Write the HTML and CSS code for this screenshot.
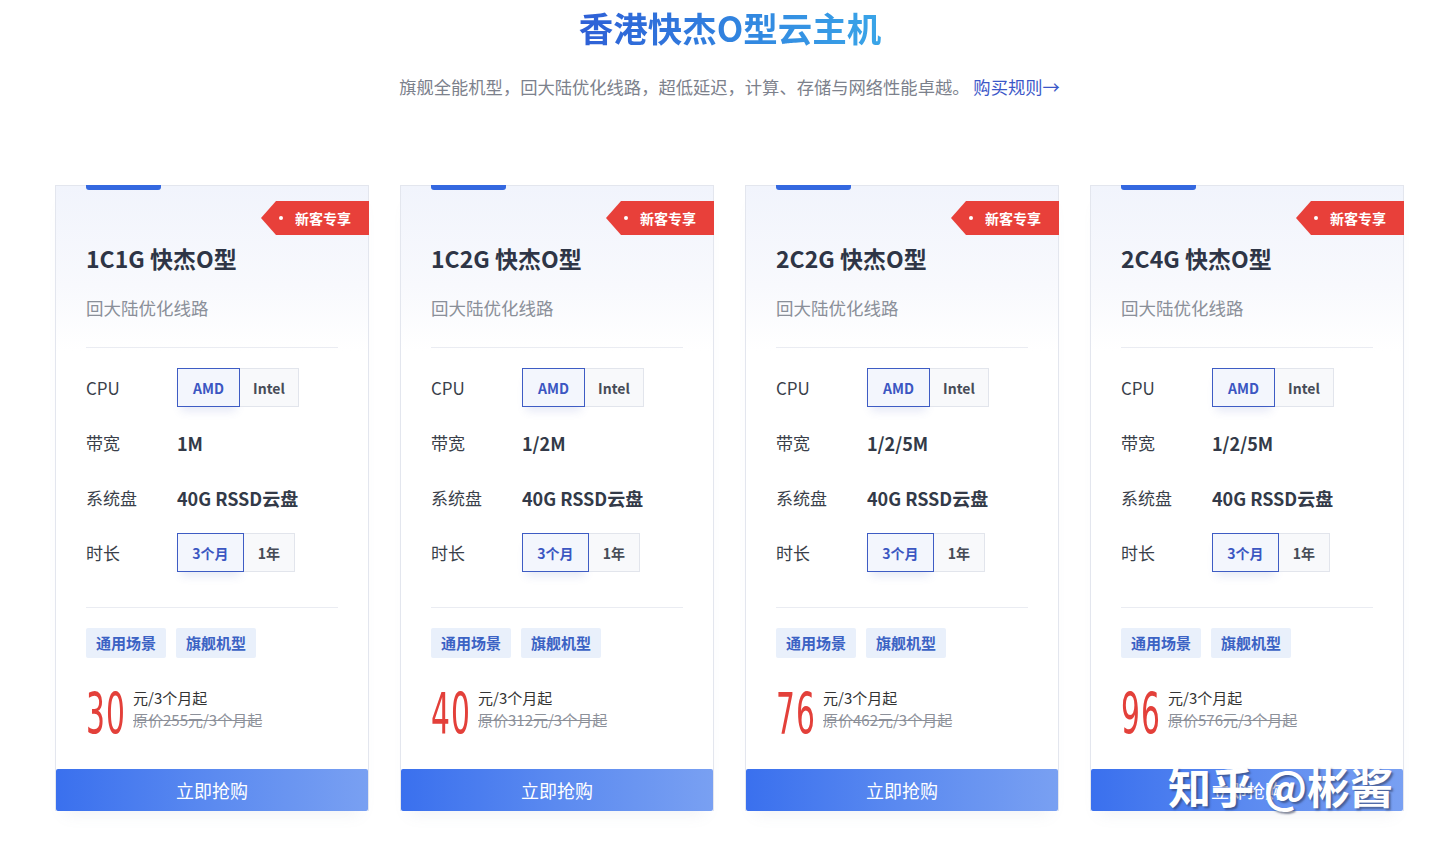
FILE: index.html
```html
<!DOCTYPE html>
<html lang="zh-CN">
<head>
<meta charset="utf-8">
<title>香港快杰O型云主机</title>
<link rel="stylesheet" href="styles.css">
</head>
<body>
<div class="page">
  <h1 class="heading">香港快杰O型云主机</h1>
  <p class="intro">旗舰全能机型，回大陆优化线路，超低延迟，计算、存储与网络性能卓越。 <a class="rule-link" href="#">购买规则→</a></p>

  <div class="cards">
    <div class="card">
      <div class="card-bar"></div>
      <div class="ribbon"><span class="ribbon-dot"></span>新客专享</div>
      <div class="card-title">1C1G 快杰O型</div>
      <div class="card-sub">回大陆优化线路</div>
      <div class="specs">
        <div class="spec"><span class="spec-label">CPU</span><div class="toggle"><span class="opt opt-on">AMD</span><span class="opt">Intel</span></div></div>
        <div class="spec"><span class="spec-label">带宽</span><span class="spec-value">1M</span></div>
        <div class="spec"><span class="spec-label">系统盘</span><span class="spec-value">40G RSSD云盘</span></div>
        <div class="spec"><span class="spec-label">时长</span><div class="toggle"><span class="opt opt-on opt-wide">3个月</span><span class="opt opt-year">1年</span></div></div>
      </div>
      <div class="tags"><span class="tag">通用场景</span><span class="tag">旗舰机型</span></div>
      <div class="price"><div class="price-num"><span>30</span></div><div class="price-txt"><div class="price-unit">元/3个月起</div><div class="price-old">原价255元/3个月起</div></div></div>
      <a class="buy" href="#">立即抢购</a>
    </div>

    <div class="card">
      <div class="card-bar"></div>
      <div class="ribbon"><span class="ribbon-dot"></span>新客专享</div>
      <div class="card-title">1C2G 快杰O型</div>
      <div class="card-sub">回大陆优化线路</div>
      <div class="specs">
        <div class="spec"><span class="spec-label">CPU</span><div class="toggle"><span class="opt opt-on">AMD</span><span class="opt">Intel</span></div></div>
        <div class="spec"><span class="spec-label">带宽</span><span class="spec-value">1/2M</span></div>
        <div class="spec"><span class="spec-label">系统盘</span><span class="spec-value">40G RSSD云盘</span></div>
        <div class="spec"><span class="spec-label">时长</span><div class="toggle"><span class="opt opt-on opt-wide">3个月</span><span class="opt opt-year">1年</span></div></div>
      </div>
      <div class="tags"><span class="tag">通用场景</span><span class="tag">旗舰机型</span></div>
      <div class="price"><div class="price-num"><span>40</span></div><div class="price-txt"><div class="price-unit">元/3个月起</div><div class="price-old">原价312元/3个月起</div></div></div>
      <a class="buy" href="#">立即抢购</a>
    </div>

    <div class="card">
      <div class="card-bar"></div>
      <div class="ribbon"><span class="ribbon-dot"></span>新客专享</div>
      <div class="card-title">2C2G 快杰O型</div>
      <div class="card-sub">回大陆优化线路</div>
      <div class="specs">
        <div class="spec"><span class="spec-label">CPU</span><div class="toggle"><span class="opt opt-on">AMD</span><span class="opt">Intel</span></div></div>
        <div class="spec"><span class="spec-label">带宽</span><span class="spec-value">1/2/5M</span></div>
        <div class="spec"><span class="spec-label">系统盘</span><span class="spec-value">40G RSSD云盘</span></div>
        <div class="spec"><span class="spec-label">时长</span><div class="toggle"><span class="opt opt-on opt-wide">3个月</span><span class="opt opt-year">1年</span></div></div>
      </div>
      <div class="tags"><span class="tag">通用场景</span><span class="tag">旗舰机型</span></div>
      <div class="price"><div class="price-num"><span>76</span></div><div class="price-txt"><div class="price-unit">元/3个月起</div><div class="price-old">原价462元/3个月起</div></div></div>
      <a class="buy" href="#">立即抢购</a>
    </div>

    <div class="card">
      <div class="card-bar"></div>
      <div class="ribbon"><span class="ribbon-dot"></span>新客专享</div>
      <div class="card-title">2C4G 快杰O型</div>
      <div class="card-sub">回大陆优化线路</div>
      <div class="specs">
        <div class="spec"><span class="spec-label">CPU</span><div class="toggle"><span class="opt opt-on">AMD</span><span class="opt">Intel</span></div></div>
        <div class="spec"><span class="spec-label">带宽</span><span class="spec-value">1/2/5M</span></div>
        <div class="spec"><span class="spec-label">系统盘</span><span class="spec-value">40G RSSD云盘</span></div>
        <div class="spec"><span class="spec-label">时长</span><div class="toggle"><span class="opt opt-on opt-wide">3个月</span><span class="opt opt-year">1年</span></div></div>
      </div>
      <div class="tags"><span class="tag">通用场景</span><span class="tag">旗舰机型</span></div>
      <div class="price"><div class="price-num"><span>96</span></div><div class="price-txt"><div class="price-unit">元/3个月起</div><div class="price-old">原价576元/3个月起</div></div></div>
      <a class="buy" href="#">立即抢购</a>
    </div>
  </div>

  <div class="watermark">知乎 @彬酱</div>
</div>
</body>
</html>
```
FILE: styles.css
```css
* { box-sizing: border-box; }
html, body { margin: 0; padding: 0; background: #ffffff; }
body {
  font-family: "Noto Sans CJK SC", "Noto Sans", sans-serif;
  color: #333;
}
.page {
  position: relative;
  width: 1432px;
  height: 842px;
  overflow: hidden;
}
.heading {
  margin: 0 auto;
  padding-top: 5px;
  font-size: 34.5px;
  line-height: 44px;
  font-weight: 700;
  color: #2f68d8;
  background: linear-gradient(90deg, #2e5fd6 0%, #3186e0 55%, #3aa5e8 100%);
  -webkit-background-clip: text;
  background-clip: text;
  -webkit-text-fill-color: transparent;
  width: max-content;
  position: relative;
  left: 14px;
}
.intro {
  margin: 26px 0 0 55px;
  width: 1349px;
  text-align: center;
  font-size: 17.3px;
  line-height: 24px;
  color: #7c818c;
}
.rule-link {
  color: #3b57c8;
  text-decoration: none;
}
.cards {
  display: flex;
  gap: 31px;
  margin: 86px 0 0 55px;
}
.card {
  position: relative;
  width: 314px;
  height: 626px;
  border: 1px solid #e3e6ee;
  border-bottom: none;
  background: linear-gradient(180deg, #f1f4fc 0px, #f8f9fd 100px, #ffffff 165px);
  padding: 0 30px;
  display: flex;
  flex-direction: column;
  box-shadow: 0 12px 16px -10px rgba(120, 130, 160, 0.12);
}
.card-bar {
  position: absolute;
  left: 30px;
  top: -1px;
  width: 75px;
  height: 5px;
  background: #3468e0;
  border-radius: 0 0 3px 3px;
}
.ribbon {
  position: absolute;
  top: 15px;
  right: -1px;
  width: 108px;
  height: 34px;
  background: #e8403a;
  clip-path: polygon(0 50%, 15px 0, 100% 0, 100% 100%, 15px 100%);
  color: #fff;
  font-size: 14px;
  font-weight: 700;
  line-height: 34px;
  padding-left: 34px;
}
.ribbon-dot {
  position: absolute;
  left: 18px;
  top: 15px;
  width: 4px;
  height: 4px;
  border-radius: 50%;
  background: #fff;
}
.card-title {
  margin-top: 56px;
  font-size: 23px;
  line-height: 32px;
  font-weight: 700;
  color: #2e3546;
}
.card-sub {
  margin-top: 22px;
  font-size: 17.5px;
  line-height: 24px;
  color: #8a8f99;
  padding-bottom: 27px;
  border-bottom: 1px solid #eaecf2;
}
.specs {
  margin-top: 20px;
  display: flex;
  flex-direction: column;
  gap: 16px;
}
.spec {
  display: flex;
  align-items: center;
  height: 39px;
}
.spec-label {
  width: 91px;
  font-size: 17px;
  color: #3a3f4a;
}
.spec-value {
  font-size: 18px;
  font-weight: 700;
  color: #333a48;
}
.toggle {
  display: flex;
  height: 39px;
}
.opt {
  display: flex;
  align-items: center;
  justify-content: center;
  width: 59px;
  height: 39px;
  border: 1px solid #e2e5ec;
  border-left: none;
  background: #f8f9fb;
  color: #474c57;
  font-size: 14px;
  font-weight: 700;
}
.opt-on {
  width: 63px;
  border: 1px solid #3e5cc4;
  background: #f3f6fd;
  color: #3b56c2;
  box-shadow: 0 8px 10px -4px rgba(70, 95, 190, 0.14);
}
.opt-wide { width: 67px; }
.opt-year { width: 51px; }
.tags {
  margin-top: 35px;
  padding-top: 20px;
  border-top: 1px solid #eaecf2;
  display: flex;
  gap: 10px;
}
.tag {
  height: 30px;
  line-height: 30px;
  padding: 0 10px;
  background: #e9f0fb;
  color: #3b62c4;
  font-size: 15px;
  font-weight: 700;
  border-radius: 2px;
}
.price {
  margin-top: 33px;
  display: flex;
  align-items: flex-start;
}
.price-num {
  width: 47px;
  height: 46px;
  overflow: visible;
  white-space: nowrap;
}
.price-num span {
  display: inline-block;
  font-family: "Liberation Sans Narrow", "DejaVu Sans Condensed", sans-serif;
  font-size: 57px;
  line-height: 46px;
  color: #e3403a;
  transform: scaleX(0.58);
  transform-origin: left center;
  letter-spacing: 2px;
}
.price-txt {
  margin-top: -4px;
}
.price-unit {
  font-size: 15px;
  line-height: 22px;
  color: #333;
}
.price-old {
  font-size: 15px;
  line-height: 22px;
  color: #8c9099;
  text-decoration: line-through;
}
.buy {
  margin: auto -30px 0;
  height: 42px;
  line-height: 42px;
  text-align: center;
  color: #fff;
  font-size: 18px;
  text-decoration: none;
  background: linear-gradient(90deg, #3a70ee 0%, #5b8af0 50%, #79a0f2 100%);
  border-radius: 2px;
}
.watermark {
  position: absolute;
  left: 1168px;
  top: 760px;
  font-size: 43px;
  line-height: 50px;
  font-weight: 700;
  color: #ffffff;
  text-shadow: 2px 2px 2px rgba(40, 50, 80, 0.55);
  white-space: nowrap;
}
```
